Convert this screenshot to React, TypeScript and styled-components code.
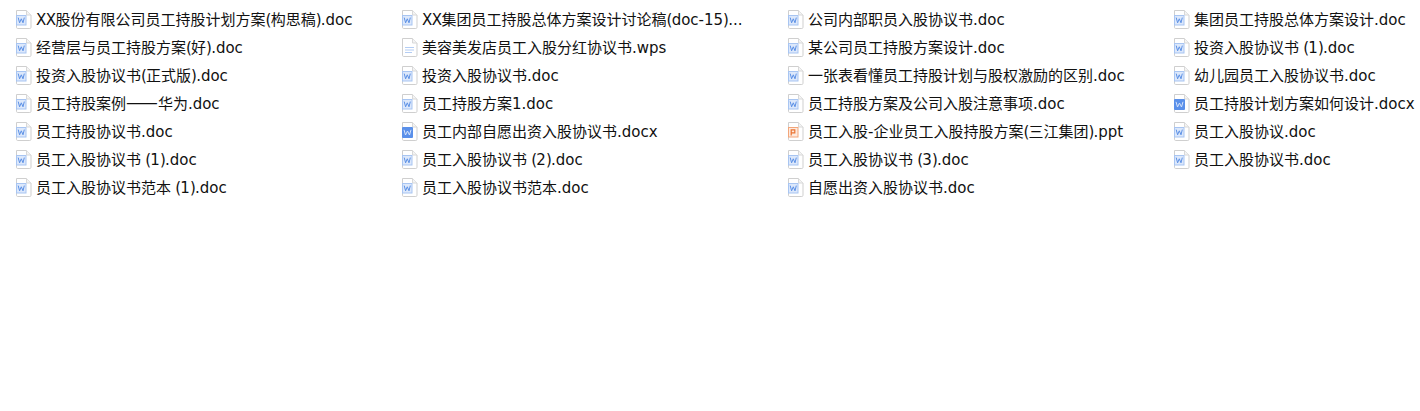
import React from "react";
import styled, { createGlobalStyle } from "styled-components";

const Global = createGlobalStyle`
  html, body { margin: 0; padding: 0; background: #fff; overflow: hidden; }
`;

const Grid = styled.ul`
  list-style: none;
  margin: 0;
  padding: 5px 0 0 15px;
  width: 1420px;
  box-sizing: border-box;
  display: grid;
  grid-template-columns: repeat(3, 386px) 1fr;
  grid-auto-rows: 28px;
  font-family: "DejaVu Sans", "Noto Sans CJK SC", sans-serif;
  font-size: 15px;
  color: #111;
`;

const Item = styled.li`
  display: flex;
  align-items: center;
  gap: 4px;
  white-space: nowrap;
  min-width: 0;
`;

const Name = styled.span`
  line-height: 26px;
  padding-top: 2px;
`;

const Narrow = styled.span<{ $track: number }>`
  letter-spacing: ${(p) => p.$track}px;
`;

const Dash = styled.span`
  font-family: "Noto Sans CJK SC", sans-serif;
  font-size: 19px;
  line-height: 1;
`;

const IconBox = styled.svg`
  flex: none;
`;

type Kind = "doc" | "docx" | "wps" | "ppt";

const FileIcon = ({ kind }: { kind: Kind }) => (
  <IconBox width="17" height="19" viewBox="0 0 17 19">
    <path d="M1.5.5H11.5L16 5V17.3a1.2 1.2 0 0 1-1.2 1.2H2.7a1.2 1.2 0 0 1-1.2-1.2Z" fill="#fff" stroke="#cfcfcf" />
    <path d="M11.5.5V5H16" fill="#f4f4f4" stroke="#d8d8d8" />
    {kind === "doc" && (
      <>
        <rect x="1.5" y="5.5" width="9.5" height="9.5" fill="#dce8fb" stroke="#a8c5f2" />
        <path d="M3.2 7.6l1.4 5.2 1.7-4 1.7 4 1.3-5.2" fill="none" stroke="#5b90e6" strokeWidth="1" />
      </>
    )}
    {kind === "docx" && (
      <>
        <rect x="1" y="5" width="11" height="11" rx="1" fill="#5a90ea" />
        <path d="M3 7.8l1.5 5.2 2-4 2 4L10 7.8" fill="none" stroke="#d5e3fb" strokeWidth="1" />
      </>
    )}
    {kind === "wps" && (
      <path d="M4 9.5h9M4 12h9M4 14.5h7" fill="none" stroke="#b4cdf4" strokeWidth="1" />
    )}
    {kind === "ppt" && (
      <>
        <rect x="1.5" y="5.5" width="9.5" height="9.5" fill="#fdeadf" stroke="#f3a67a" />
        <path d="M4.2 13.5V7.8h3.6v3H4.2" fill="none" stroke="#ea7433" strokeWidth="1.2" />
      </>
    )}
  </IconBox>
);

const tracks: Record<string, number> = {
  "(": -0.8,
  ")": -0.8,
  " ": -0.5,
  X: -0.5,
};

const Label = ({ text }: { text: string }) => (
  <Name>
    {text.split(/([()X ]|——)/).map((part, i) =>
      part === "——" ? (
        <Dash key={i}>{part}</Dash>
      ) : tracks[part] !== undefined ? (
        <Narrow key={i} $track={tracks[part]}>
          {part}
        </Narrow>
      ) : (
        part
      ),
    )}
  </Name>
);

const files: [Kind, string][] = [
  ["doc", "XX股份有限公司员工持股计划方案(构思稿).doc"],
  ["doc", "XX集团员工持股总体方案设计讨论稿(doc-15)..."],
  ["doc", "公司内部职员入股协议书.doc"],
  ["doc", "集团员工持股总体方案设计.doc"],
  ["doc", "经营层与员工持股方案(好).doc"],
  ["wps", "美容美发店员工入股分红协议书.wps"],
  ["doc", "某公司员工持股方案设计.doc"],
  ["doc", "投资入股协议书 (1).doc"],
  ["doc", "投资入股协议书(正式版).doc"],
  ["doc", "投资入股协议书.doc"],
  ["doc", "一张表看懂员工持股计划与股权激励的区别.doc"],
  ["doc", "幼儿园员工入股协议书.doc"],
  ["doc", "员工持股案例——华为.doc"],
  ["doc", "员工持股方案1.doc"],
  ["doc", "员工持股方案及公司入股注意事项.doc"],
  ["docx", "员工持股计划方案如何设计.docx"],
  ["doc", "员工持股协议书.doc"],
  ["docx", "员工内部自愿出资入股协议书.docx"],
  ["ppt", "员工入股-企业员工入股持股方案(三江集团).ppt"],
  ["doc", "员工入股协议.doc"],
  ["doc", "员工入股协议书 (1).doc"],
  ["doc", "员工入股协议书 (2).doc"],
  ["doc", "员工入股协议书 (3).doc"],
  ["doc", "员工入股协议书.doc"],
  ["doc", "员工入股协议书范本 (1).doc"],
  ["doc", "员工入股协议书范本.doc"],
  ["doc", "自愿出资入股协议书.doc"],
];

export default function App() {
  return (
    <>
      <Global />
      <Grid>
        {files.map(([kind, name]) => (
          <Item key={name}>
            <FileIcon kind={kind} />
            <Label text={name} />
          </Item>
        ))}
      </Grid>
    </>
  );
}
